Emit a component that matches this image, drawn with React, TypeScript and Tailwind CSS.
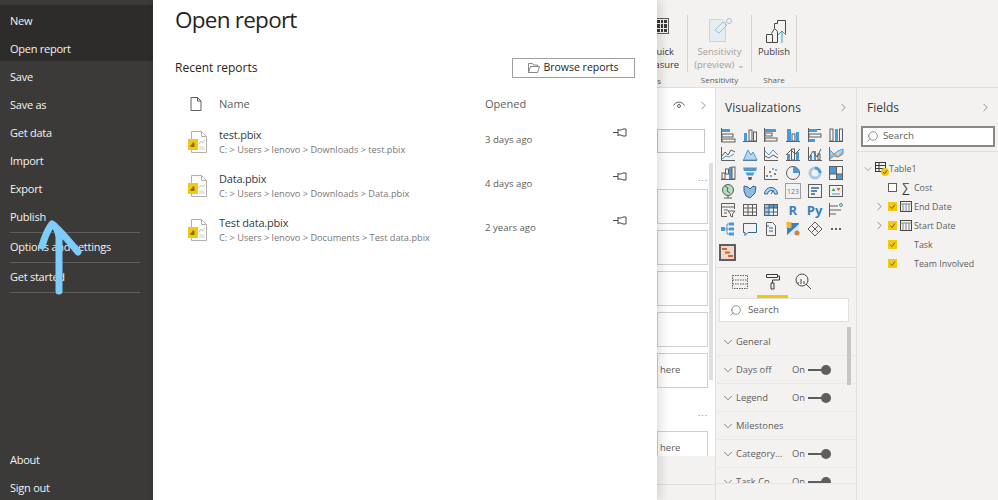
import React from "react";
import { ChevronDown, ChevronRight, Search } from "lucide-react";

const Menu = ({ label }: { label: string }) => (
  <div className="h-[28px] ml-[10px] pt-[4px] flex items-center text-[11px] tracking-[-0.25px] text-[#f3f2f1]">{label}</div>
);

const MenuLine = ({ label }: { label: string }) => (
  <div className="h-[30px] ml-[10px] mr-[13px] flex items-center text-[11px] tracking-[-0.25px] text-[#f3f2f1] border-b border-[#605e5c]">{label}</div>
);

const FileIcon = () => (
  <svg width="22" height="24" viewBox="0 0 22 24" className="shrink-0">
    <path d="M4.5 1.5h10l5 5v16h-15z" fill="#fff" stroke="#b3b0ad" />
    <path d="M14.5 1.5v5h5" fill="none" stroke="#b3b0ad" />
    <path d="M12 14l2-3 2 2 2-3" fill="none" stroke="#c8c6c4" />
    <path d="M12 19h6M12 17h5" stroke="#d2d0ce" />
    <rect x="1" y="9" width="10" height="11" fill="#f2c811" />
    <path d="M3.5 17v-2l2-1v-2l2 1v4z" fill="#8a6d1a" />
  </svg>
);

const PinIcon = () => (
  <svg width="14" height="9" viewBox="0 0 14 9" fill="none" stroke="#4a4846" strokeWidth="1">
    <path d="M0 4.5h5M5 1v7M5 2h3l2-1h3v7h-3l-2-1H5" />
  </svg>
);

const Recent = ({ name, path, when }: { name: string; path: string; when: string }) => (
  <div className="h-[44px] flex">
    <div className="w-[44px] pl-[12px] pt-[8px]">
      <FileIcon />
    </div>
    <div className="w-[266px] pt-[5px]">
      <div className="text-[11px] tracking-[-0.2px] leading-[16px] text-[#3b3a39]">{name}</div>
      <div className="text-[9.2px] leading-[14px] text-[#797775]">{path}</div>
    </div>
    <div className="w-[128px] pt-[10px] text-[9.6px] leading-[16px] text-[#605e5c]">{when}</div>
    <div className="pt-[6px]">
      <PinIcon />
    </div>
  </div>
);

const Slot = ({ text }: { text?: string }) => (
  <div className="h-[35px] shrink-0 w-full border border-[#d2d0ce] bg-white flex items-center text-[9.5px] text-[#605e5c]">
    <span className="ml-[2px]">{text}</span>
  </div>
);

const Viz = ({ children }: { children: React.ReactNode }) => (
  <svg width="16" height="16" viewBox="0 0 16 16" fill="none" stroke="#605e5c" strokeWidth="1">
    {children}
  </svg>
);

const B = "#4a9ad8";

const vizIcons: React.ReactNode[] = [
  <Viz><path d="M1.5 1v14" /><rect x="2" y="2" width="8" height="3" fill={B} stroke="none" /><rect x="2" y="7" width="11" height="3" stroke="#605e5c" /><rect x="2" y="12" width="13" height="3" /></Viz>,
  <Viz><path d="M1 14.5h14" /><rect x="2" y="6" width="3" height="8" fill={B} stroke="none" /><rect x="7" y="3" width="3" height="11" /><rect x="11.5" y="5" width="3" height="9" /></Viz>,
  <Viz><path d="M1.5 1v14" /><rect x="2" y="2" width="11" height="3" fill={B} stroke="none" /><rect x="2" y="6" width="7" height="3" /><rect x="2" y="11" width="12" height="3" /></Viz>,
  <Viz><path d="M1 14.5h14" /><rect x="2" y="2" width="4" height="12" fill={B} stroke="none" /><rect x="7" y="7" width="3" height="7" /><rect x="11" y="5" width="3" height="9" fill={B} stroke="none" /></Viz>,
  <Viz><path d="M1.5 1v14" /><rect x="2" y="2" width="8" height="3" fill={B} stroke="none" /><path d="M10 2.5h4" /><rect x="2" y="7" width="12" height="3" /><rect x="2" y="12" width="6" height="3" fill={B} stroke="none" /></Viz>,
  <Viz><path d="M1 14.5h14" /><rect x="2" y="2" width="3" height="12" /><rect x="7" y="2" width="3" height="12" fill={B} stroke="none" /><rect x="11.5" y="2" width="3" height="12" /></Viz>,
  <Viz><path d="M1.5 1v13.5H15" /><path d="M2 10l3-4 3 3 3-5 4 2" stroke="#605e5c" /><path d="M2 13l4-3 3 1 5-3" stroke={B} /></Viz>,
  <Viz><path d="M1 14.5h14" /><path d="M1.5 14L6 4l3 5 2-3 4 8z" fill="#b5d6f0" stroke={B} /></Viz>,
  <Viz><path d="M1.5 1v13.5H15" /><path d="M2 5l4 4 4-5 5 5" stroke={B} /><path d="M2 10l4 2 4-3 5 3" /></Viz>,
  <Viz><path d="M1 14.5h14" /><rect x="2" y="8" width="3" height="6" fill={B} stroke="none" /><rect x="6.5" y="3" width="3" height="11" /><rect x="11" y="6" width="3" height="8" fill={B} stroke="none" /><path d="M1 9l5-5 4 4 5-5" /></Viz>,
  <Viz><path d="M1.5 1v13.5H15" /><rect x="3" y="9" width="2" height="5" fill={B} stroke="none" /><rect x="7" y="5" width="2" height="9" fill={B} stroke="none" /><rect x="11" y="8" width="2" height="6" /><path d="M2 12l4-7 4 6 4-8" /></Viz>,
  <Viz><path d="M1.5 1v13.5H15" /><path d="M2 4l4 4 4-3 5-2v5l-5 3-4-1-4 3z" fill="#b5d6f0" stroke={B} /><path d="M2 11l4-3 4 3 5-6" stroke="#d68a2e" /></Viz>,
  <Viz><path d="M1 14.5h14" /><rect x="2" y="8" width="3" height="6" /><rect x="5.5" y="4" width="3" height="5" /><rect x="9" y="2" width="3" height="12" fill={B} stroke="none" /><rect x="12" y="2" width="3" height="12" /></Viz>,
  <Viz><path d="M1 2.5h14l-1 3.5H2z" fill={B} stroke="none" /><path d="M3.5 7.5h9L11 10.5H5z" fill={B} stroke="none" /><path d="M6 12h4l-.6 3H6.6z" fill="#605e5c" stroke="none" /></Viz>,
  <Viz><path d="M1.5 1v13.5H15" /><g fill="#605e5c" stroke="none"><circle cx="4" cy="11" r="1" /><circle cx="7" cy="7" r="1" /><circle cx="12" cy="9" r="1" /></g><g fill={B} stroke="none"><circle cx="10" cy="4" r="1" /><circle cx="13" cy="5" r="1" /><circle cx="8" cy="11" r="1" /></g></Viz>,
  <Viz><circle cx="8" cy="8" r="6.5" /><path d="M8 8V1.5A6.5 6.5 0 0 1 14.5 8z" fill={B} stroke="none" /></Viz>,
  <Viz><circle cx="8" cy="8" r="5" stroke="#a6c9e8" strokeWidth="3" /><path d="M8 3a5 5 0 0 1 5 5" stroke={B} strokeWidth="3" /></Viz>,
  <Viz><rect x="1.5" y="1.5" width="13" height="13" /><rect x="2" y="2" width="6" height="7" fill={B} stroke="none" /><rect x="9" y="9" width="5" height="5" fill={B} stroke="none" /><path d="M8.5 1.5v13M1.5 9h13" /></Viz>,
  <Viz><circle cx="8" cy="7" r="5.5" fill="#bcd9c3" stroke="#3c6e52" /><path d="M5 3l3 2-1 3 3 2" stroke="#3c6e52" /><path d="M4 15h8M8 12.5V15" /></Viz>,
  <Viz><path d="M2 3l4 1 2 2 3-3 3 1-1 6-5 5-4-2-2-5z" fill="#8fbde2" stroke="#33658f" /></Viz>,
  <Viz><path d="M1.5 11a6.5 6.5 0 0 1 13 0h-3a3.5 3.5 0 0 0-7 0z" fill="#b5d6f0" stroke="#33658f" /><path d="M8 11l2.5-4" stroke="#33658f" /></Viz>,
  <div className="w-[16px] h-[16px] border border-[#a19f9d] flex items-center justify-center text-[7px] leading-none text-[#797775]">123</div>,
  <Viz><rect x="1.5" y="1.5" width="13" height="13" /><path d="M4 5h8M4 8h6M4 11h4" stroke="#33658f" strokeWidth="1.4" /></Viz>,
  <Viz><rect x="1.5" y="2.5" width="13" height="11" /><path d="M3.5 8l2-3 2 3z" fill="#3fa45b" stroke="none" /><path d="M8.5 5h4l-2 3z" fill="#d9534f" stroke="none" /><path d="M4 11h8" stroke={B} /></Viz>,
  <Viz><path d="M14.5 7V1.5h-13v13H7" /><path d="M1.5 5h13M4 8h4M4 11h3" /><path d="M8 9h7l-2.5 3v3l-2-1v-2z" fill="#fff" /></Viz>,
  <Viz><rect x="1.5" y="2.5" width="13" height="11" /><path d="M1.5 6h13M1.5 10h13M6 2.5v11M10.5 2.5v11" /></Viz>,
  <Viz><rect x="1.5" y="2.5" width="13" height="11" /><rect x="2" y="3" width="12" height="3" fill={B} stroke="none" /><rect x="2" y="3" width="4" height="10" fill="#a6c9e8" stroke="none" /><path d="M1.5 6h13M1.5 10h13M6 2.5v11M10.5 2.5v11" stroke="#33658f" /></Viz>,
  <div className="w-[16px] h-[16px] flex items-center justify-center text-[13px] leading-none font-bold text-[#3a7fbf]">R</div>,
  <div className="w-[16px] h-[16px] flex items-center justify-center text-[13px] leading-none font-bold text-[#3a7fbf]">Py</div>,
  <Viz><path d="M1.5 1v14" /><path d="M2 4h8M2 8h11M2 12h6" /><circle cx="13" cy="3" r="1.4" stroke="#3a8f8f" /></Viz>,
  <Viz><rect x="1" y="6" width="4" height="4" fill={B} stroke="none" /><rect x="9" y="1.5" width="5" height="3" fill={B} stroke="none" /><rect x="9" y="6.5" width="5" height="3" fill={B} stroke="none" /><rect x="9" y="11.5" width="5" height="3" fill={B} stroke="none" /><path d="M5 8h4M7 3v10h2M7 3h2" stroke={B} /></Viz>,
  <Viz><path d="M1.5 2.5h13v9H6l-3 3v-3H1.5z" stroke="#33658f" /></Viz>,
  <Viz><path d="M3.5 1.5h6l3 3v10h-9z" /><path d="M6 7h4M6 10h4M3 5h3" stroke="#33658f" /></Viz>,
  <Viz><rect x="2" y="2" width="12" height="12" fill="#3a7fbf" stroke="none" /><path d="M2 14L14 3v11z" fill="#dbe9f5" stroke="none" /><rect x="1.5" y="1" width="5" height="6" fill="#f2b632" stroke="none" /><circle cx="12" cy="12" r="2.5" fill="#d9822b" stroke="none" /></Viz>,
  <Viz><path d="M8 1l7 7-7 7-7-7z" /><path d="M4.5 4.5l7 7M11.5 4.5l-7 7" /></Viz>,
  <div className="w-[16px] h-[16px] flex items-center justify-center gap-[2px]">
    <i className="w-[2px] h-[2px] bg-[#605e5c]" />
    <i className="w-[2px] h-[2px] bg-[#605e5c]" />
    <i className="w-[2px] h-[2px] bg-[#605e5c]" />
  </div>,
];

const Toggle = () => (
  <div className="flex items-center ml-auto mr-[18px]">
    <span className="text-[9.4px] text-[#605e5c] mr-[3px]">On</span>
    <span className="w-[14px] h-[2px] bg-[#605e5c]" />
    <span className="w-[10px] h-[10px] rounded-full bg-[#605e5c] -ml-[1px]" />
  </div>
);

const Section = ({ label, on }: { label: string; on?: boolean }) => (
  <div className="h-[28px] shrink-0 flex items-center border-b border-[#ebe9e7] pr-[7px]">
    <ChevronDown size={14} strokeWidth={1} className="ml-[5px] text-[#3b3a39]" />
    <span className="ml-[1px] text-[9.4px] text-[#605e5c]">{label}</span>
    {on && <Toggle />}
  </div>
);

const Check = ({ on }: { on?: boolean }) =>
  on ? (
    <span className="w-[9px] h-[9px] bg-[#f2c811] flex items-center justify-center shrink-0">
      <svg width="7" height="7" viewBox="0 0 7 7" fill="none" stroke="#7a6310" strokeWidth="1">
        <path d="M1 3.5l2 2 3-4" />
      </svg>
    </span>
  ) : (
    <span className="block w-[9px] h-[9px] border border-[#605e5c] bg-white shrink-0" />
  );

const CalIcon = () => (
  <svg width="12" height="11" viewBox="0 0 12 11" fill="none" stroke="#4a4846" strokeWidth="1" className="shrink-0">
    <rect x="0.5" y="0.5" width="11" height="10" />
    <path d="M0.5 3h11M3 3v7M6 3v7M9 3v7" stroke="#8a8886" />
  </svg>
);

const Field = ({ label, on, caret, icon }: { label: string; on?: boolean; caret?: boolean; icon?: React.ReactNode }) => (
  <div className="h-[19px] flex items-center">
    <span className="w-[31px] flex justify-end shrink-0">
      {caret && <ChevronRight size={13} strokeWidth={1} className="text-[#3b3a39] mr-[2px]" />}
    </span>
    <Check on={on} />
    <span className="w-[12px] ml-[3px] mr-[2px] flex justify-center shrink-0">{icon}</span>
    <span className="text-[8.9px] text-[#605e5c]">{label}</span>
  </div>
);

const SearchBox = ({ cls, text }: { cls: string; text: string }) => (
  <div className={`flex items-center bg-white ${cls}`}>
    <Search size={13} strokeWidth={1} className="-scale-x-100 text-[#3b3a39] shrink-0" />
    <span className={`text-[9.8px] text-[#605e5c] ${text}`}>Search</span>
  </div>
);

export default function App() {
  return (
    <div className="relative w-[998px] h-[500px] overflow-hidden flex bg-white font-['Open_Sans',sans-serif]">
      {/* file menu */}
      <div className="w-[153px] shrink-0 bg-[#3b3a39] pt-[5px] flex flex-col">
        <div className="bg-[#2e2c2b] h-[56px]">
          <Menu label="New" />
          <Menu label="Open report" />
        </div>
        <Menu label="Save" />
        <Menu label="Save as" />
        <Menu label="Get data" />
        <Menu label="Import" />
        <Menu label="Export" />
        <Menu label="Publish" />
        <div className="h-[3px] shrink-0" />
        <div className="h-[1px] shrink-0 ml-[10px] mr-[13px] bg-[#605e5c]" />
        <MenuLine label="Options and settings" />
        <MenuLine label="Get started" />
        <div className="mt-auto">
          <Menu label="About" />
          <Menu label="Sign out" />
        </div>
      </div>

      {/* open report panel */}
      <div className="w-[504px] shrink-0 bg-white px-[22px] z-10 shadow-[4px_0_10px_rgba(0,0,0,0.12)]">
        <h1 className="text-[22.5px] leading-[30px] mt-[5px] text-[#252423] tracking-[-0.75px]">Open report</h1>
        <div className="flex items-center justify-between mt-[23px] h-[20px]">
          <span className="text-[12px] font-medium text-[#252423]">Recent reports</span>
          <div className="w-[123px] h-[20px] border border-[#a19f9d] flex items-center justify-center gap-[3px] text-[10.5px] font-medium text-[#252423]">
            <svg width="12" height="10" viewBox="0 0 12 10" fill="none" stroke="#8a8886">
              <path d="M0.5 9.5v-9h4l1 1.5h4v1.5M0.5 9.5h9l2-6h-9z" />
            </svg>
            Browse reports
          </div>
        </div>
        <div className="flex items-center h-[20px] mt-[16px] text-[11px] text-[#605e5c]">
          <div className="w-[44px] pl-[15px]">
            <svg width="12" height="14" viewBox="0 0 12 14" fill="none" stroke="#605e5c">
              <path d="M1 0.5h6.5l3.5 3.5v9.5H1zM7.5 0.5V4H11" />
            </svg>
          </div>
          <div className="w-[266px]">Name</div>
          <div>Opened</div>
        </div>
        <div className="mt-[8px]">
          <Recent name="test.pbix" path="C: > Users > lenovo > Downloads > test.pbix" when="3 days ago" />
          <Recent name="Data.pbix" path="C: > Users > lenovo > Downloads > Data.pbix" when="4 days ago" />
          <Recent name="Test data.pbix" path="C: > Users > lenovo > Documents > Test data.pbix" when="2 years ago" />
        </div>
      </div>

      {/* desktop behind */}
      <div className="flex-1 flex flex-col min-w-0 bg-[#f3f2f1]">
        <div className="h-[88px] shrink-0 flex border-b border-[#e1dfdd] text-[9.4px] text-[#3b3a39]">
          <div className="w-[30px] relative">
            <div className="absolute right-[18px] top-[18px] w-[14px] h-[16px] border border-[#605e5c] grid grid-cols-3 gap-[1px] p-[1px]">
              {Array.from({ length: 9 }).map((_, i) => (
                <i key={i} className="bg-[#3b3a39]" />
              ))}
            </div>
            <div className="absolute right-[8px] top-[45px] leading-[13px] text-right whitespace-nowrap">
              <div className="mr-[5px]">uick</div>
              <div>asure</div>
            </div>
            <div className="absolute right-[26px] top-[75px] text-[8px] text-[#605e5c]">ns</div>
          </div>
          <div className="w-[64px] my-[15px] border-l border-[#d2d0ce] relative text-center">
            <svg width="26" height="28" viewBox="0 0 26 28" fill="none" className="absolute left-[20px] top-[1px]">
              <path d="M1.5 3.5h12l4 3v19h-16z" fill="#e4edf1" stroke="#c5d5dc" />
              <path d="M7 14l8-8 4 3-8 8z" stroke="#a9bdc6" />
              <circle cx="21" cy="5" r="2.5" stroke="#a9bdc6" />
            </svg>
            <div className="absolute inset-x-0 top-[30px] leading-[13px] text-[#a19f9d]">Sensitivity<br />(preview) ⌄</div>
            <div className="absolute inset-x-0 top-[59px] text-[8px] text-[#605e5c]">Sensitivity</div>
          </div>
          <div className="w-[46px] my-[15px] border-x border-[#d2d0ce] relative text-center">
            <svg width="24" height="26" viewBox="0 0 24 26" fill="none" stroke="#4a4846" className="absolute left-[13px] top-[4px]">
              <path d="M1.5 15.5h6v8h-6zM7.5 23.5h5v-11l-3-3-3 5M9.5 9.5v-5h3v-3h8v13" />
              <path d="M17 24V12M13 16l4-4 4 4" stroke="#3aa0b8" />
            </svg>
            <div className="absolute inset-x-0 top-[30px] leading-[13px]">Publish</div>
            <div className="absolute inset-x-0 top-[59px] text-[8px] text-[#605e5c]">Share</div>
          </div>
        </div>

        <div className="flex-1 flex min-h-0">
          {/* filters, cut off by the panel */}
          <div className="w-[58px] shrink-0 bg-white flex flex-col">
            <div className="h-[41px] shrink-0 relative">
              <svg width="12" height="8" viewBox="0 0 12 8" fill="none" stroke="#605e5c" className="absolute left-[16px] top-[13px]">
                <path d="M0.5 4.5C3 0 9 0 11.5 4.5" />
                <circle cx="6" cy="5" r="1.5" />
              </svg>
              <ChevronRight size={13} strokeWidth={1} className="absolute left-[40px] top-[11px] text-[#3b3a39]" />
            </div>
            <div className="h-[24px] shrink-0 mr-[10px] border border-[#c8c6c4] bg-white" />
            <div className="flex-1 flex min-h-0">
              <div className="w-[51px] flex flex-col overflow-hidden">
                <div className="h-[36px] shrink-0 text-right text-[9px] leading-[50px] text-[#797775] tracking-[1px]">...</div>
                <div className="flex flex-col gap-[6px]">
                  <Slot />
                  <Slot />
                  <Slot />
                  <Slot />
                  <Slot text="here" />
                </div>
                <div className="h-[43px] shrink-0 text-right text-[9px] leading-[50px] text-[#797775] tracking-[1px]">...</div>
                <Slot text="here" />
              </div>
              <div className="w-[7px] pl-[1px] pt-[10px]">
                <div className="w-[4px] h-[217px] bg-[#e1dfdd]" />
              </div>
            </div>
            <div className="h-[44px] shrink-0 bg-[#f3f2f1] relative">
              <div className="absolute inset-x-0 top-[28px] h-[1px] bg-[#e1dfdd]" />
            </div>
          </div>

          {/* visualizations */}
          <div className="w-[142px] shrink-0 border-x border-[#e1dfdd] flex flex-col">
            <div className="h-[37px] shrink-0 flex items-center justify-between pt-[2px] pl-[9px] pr-[6px]">
              <span className="text-[12px] font-medium text-[#3b3a39]">Visualizations</span>
              <ChevronRight size={13} strokeWidth={1} className="text-[#3b3a39]" />
            </div>
            <div className="grid grid-cols-[repeat(6,21.7px)] auto-rows-[18.7px] pl-[1px] pt-[1px] items-center justify-items-center">
              {vizIcons.map((icon, i) => (
                <div key={i}>{icon}</div>
              ))}
            </div>
            <div className="h-[30px] shrink-0 pl-[3px] pt-[6px] border-b border-[#e1dfdd]">
              <svg width="17" height="17" viewBox="0 0 17 17" fill="none">
                <rect x="1" y="1" width="15" height="15" fill="#f0d9c8" stroke="#605e5c" strokeWidth="2" />
                <path d="M3 5h5M6 8.5h5M9 12h5" stroke="#d2603a" strokeWidth="2" />
              </svg>
            </div>
            <div className="h-[30px] shrink-0 flex items-center relative">
              <svg width="16" height="14" viewBox="0 0 16 14" fill="none" stroke="#605e5c" strokeDasharray="1.5 1" className="absolute left-[16px] top-[7px]">
                <rect x="0.5" y="0.5" width="15" height="13" />
                <path d="M0.5 5h15M0.5 9h15" />
              </svg>
              <svg width="15" height="17" viewBox="0 0 15 17" fill="none" stroke="#3b3a39" className="absolute left-[49px] top-[5px]">
                <path d="M1.5 1.5h11v3h-11zM12.5 3h2v4h-7v3M6 10h3v6H6z" />
              </svg>
              <svg width="17" height="17" viewBox="0 0 17 17" fill="none" stroke="#4a4846" className="absolute left-[79px] top-[5px]">
                <circle cx="7" cy="7" r="6" />
                <path d="M3 9v2M6 6v5M9 8v3M11 11l5 5" />
              </svg>
              <div className="absolute left-[41px] top-[27px] w-[31px] h-[3px] bg-[#f2c811]" />
            </div>
            <SearchBox cls="h-[24px] shrink-0 ml-[3px] w-[130px] border border-[#e1dfdd] pl-[9px]" text="ml-[6px]" />
            <div className="flex-1 min-h-0 relative overflow-hidden pt-[6px] flex flex-col">
              <Section label="General" />
              <Section label="Days off" on />
              <Section label="Legend" on />
              <Section label="Milestones" />
              <Section label="Category..." on />
              <Section label="Task Co..." on />
              <div className="absolute right-[5px] top-[5px] w-[4px] h-[58px] bg-[#c8c6c4]" />
            </div>
            <div className="h-[17px] shrink-0 border-t border-[#e9e7e5]" />
          </div>

          {/* fields */}
          <div className="flex-1 min-w-0 flex flex-col">
            <div className="h-[38px] shrink-0 flex items-center justify-between pt-[1px] pl-[10px] pr-[6px]">
              <span className="text-[12px] font-medium text-[#3b3a39]">Fields</span>
              <ChevronRight size={13} strokeWidth={1} className="text-[#3b3a39]" />
            </div>
            <SearchBox cls="h-[21px] shrink-0 ml-[4px] mr-[3px] border-2 border-[#8a8886] pl-[3px]" text="ml-[4px]" />
            <div className="h-[5px] shrink-0 border-b border-[#e1dfdd]" />
            <div className="pt-[8px]">
              <div className="h-[18px] flex items-center">
                <ChevronDown size={12} strokeWidth={1} className="ml-[5px] text-[#605e5c]" />
                <span className="relative ml-[1px] w-[14px] h-[14px]">
                  <svg width="12" height="10" viewBox="0 0 12 10" fill="none" stroke="#3b3a39">
                    <rect x="0.5" y="0.5" width="10" height="9" />
                    <path d="M0.5 3.5h10M0.5 6.5h10M4 0.5v9" />
                  </svg>
                  <span className="absolute left-[6px] top-[6px] w-[8px] h-[8px] rounded-full bg-[#f2c811] flex items-center justify-center">
                    <svg width="6" height="6" viewBox="0 0 7 7" fill="none" stroke="#3b3a39">
                      <path d="M1 3.5l2 2 3-4" />
                    </svg>
                  </span>
                </span>
                <span className="text-[8.9px] text-[#605e5c]">Table1</span>
              </div>
              <Field label="Cost" icon={<span className="text-[12px] leading-none text-[#3b3a39]">∑</span>} />
              <Field label="End Date" on caret icon={<CalIcon />} />
              <Field label="Start Date" on caret icon={<CalIcon />} />
              <Field label="Task" on />
              <Field label="Team Involved" on />
            </div>
          </div>
        </div>
      </div>

      {/* hand drawn arrow on top of the screenshot */}
      <svg width="100" height="90" viewBox="0 0 100 90" fill="none" className="absolute left-0 top-[215px] z-20" stroke="#7ccdfb" strokeWidth="7" strokeLinecap="round" strokeLinejoin="round">
        <path d="M59 76V22C58 15 56 11 52 9C48 14 45 21 42 31M52 9C60 15 69 26 78 37" />
      </svg>
    </div>
  );
}
